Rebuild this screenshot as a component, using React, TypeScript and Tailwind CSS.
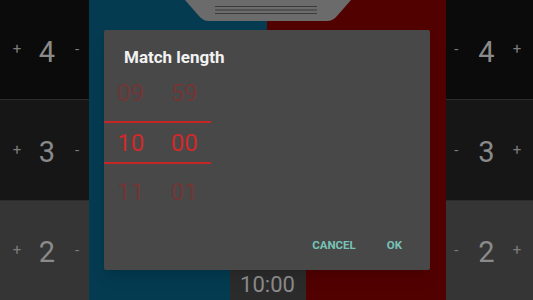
import React from "react";

const SIDE_ROWS = [
  { value: 4, bg: "bg-[#0b0b0b]" },
  { value: 3, bg: "bg-[#161616]" },
  { value: 2, bg: "bg-[#353535]" },
];

// score column: the digit sits a little off-centre, toward the middle of the screen
function SideColumn({ mirrored }: { mirrored?: boolean }) {
  return (
    <div className="flex flex-col w-full h-full">
      {SIDE_ROWS.map((row) => (
        <div
          key={row.value}
          className={`flex-1 flex items-center justify-center gap-[18px] border-b border-[#2c2c2c] last:border-b-0 ${row.bg} ${mirrored ? "pr-[6px]" : "pl-[5px]"}`}
        >
          <span className="text-[15px] text-[#7d7d7d] w-[8px] text-center">{mirrored ? "-" : "+"}</span>
          <span className="text-[29px] text-[#8a8a8a] leading-none pt-[5px]">{row.value}</span>
          <span className="text-[15px] text-[#7d7d7d] w-[8px] text-center">{mirrored ? "+" : "-"}</span>
        </div>
      ))}
    </div>
  );
}

function TopTab() {
  return (
    <svg width="166" height="21" viewBox="0 0 166 21">
      <path d="M0 0 H166 L152 16 Q148 21 142 21 H24 Q18 21 14 16 Z" fill="#6b6b6b" />
      <rect x="30" y="6" width="102" height="1" fill="#3a3a3a" />
      <rect x="30" y="9.5" width="102" height="1" fill="#3a3a3a" />
      <rect x="30" y="13" width="102" height="1" fill="#3a3a3a" />
    </svg>
  );
}

function PickerRow({ left, right, selected, className }: { left: string; right: string; selected?: boolean; className: string }) {
  const color = selected ? "text-[#cf2a2a]" : "text-[#713636]";
  return (
    <div className={`grid grid-cols-2 items-center ${className}`}>
      <span className={`text-center text-[24px] leading-none ${color}`}>{left}</span>
      <span className={`text-center text-[24px] leading-none ${color}`}>{right}</span>
    </div>
  );
}

function MatchLengthDialog() {
  return (
    <div className="absolute left-[104px] top-[30px] w-[326px] h-[240px] bg-[#484848] rounded-[2px] shadow-lg flex flex-col">
      <div className="pl-[20px] pt-[15px] text-[17px] font-bold text-[#f2f2f2] leading-[24px]">Match length</div>
      <div className="w-[107px] mt-[-1px] flex flex-col">
        <PickerRow left="09" right="59" className="h-[50px]" />
        <div className="h-[2px] mt-[3px] bg-[#c62525]" />
        <PickerRow left="10" right="00" selected className="h-[39px]" />
        <div className="h-[2px] bg-[#c62525]" />
        <PickerRow left="11" right="01" className="h-[56px]" />
      </div>
      <div className="flex-1" />
      <div className="flex justify-end items-center gap-[31px] pr-[28px] pb-[16px] text-[11.5px] font-bold text-[#76c3b6]">
        <span>CANCEL</span>
        <span>OK</span>
      </div>
    </div>
  );
}

export default function App() {
  return (
    <div
      className="relative w-[533px] h-[300px] overflow-hidden flex bg-black"
      style={{ fontFamily: "Roboto, 'Noto Sans', sans-serif" }}
    >
      <div className="w-[89px] h-full">
        <SideColumn />
      </div>
      <div className="flex-1 h-full flex flex-col items-center justify-between bg-[linear-gradient(to_right,#043b50_50%,#520101_50%)]">
        <TopTab />
        <div className="w-[76px] h-[30px] bg-[#2b2b2b] flex items-center justify-center text-[22px] text-[#8c8c8c] leading-none">
          10:00
        </div>
      </div>
      <div className="w-[87px] h-full">
        <SideColumn mirrored />
      </div>
      <MatchLengthDialog />
    </div>
  );
}
